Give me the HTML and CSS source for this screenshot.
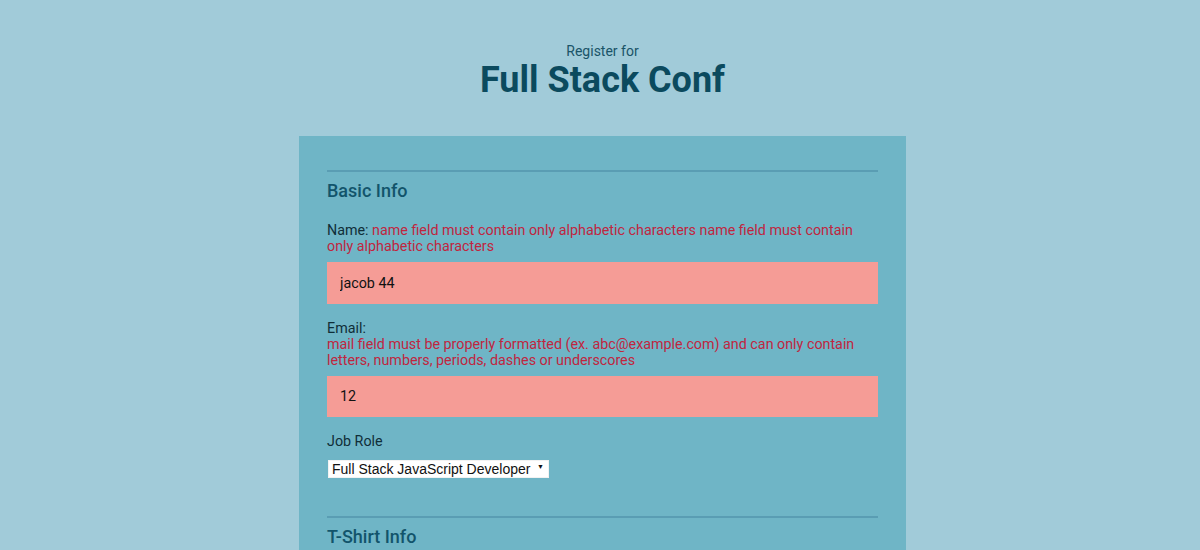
FILE: index.html
```html
<!DOCTYPE html>
<html lang="en">
<head>
    <meta charset="UTF-8">
    <meta name="viewport" content="width=device-width, initial-scale=1.0">
    <title>Full Stack Conf</title>
    <link rel="stylesheet" href="styles.css">
</head>
<body>
    <!-- Page header -->
    <header class="page-header">
        <span class="header-sub">Register for</span>
        <h1 class="header-title">Full Stack Conf</h1>
    </header>

    <form class="container">
        <!-- Basic info -->
        <fieldset class="section">
            <h2 class="section-title">Basic Info</h2>

            <label class="field-label" for="name">Name: <span class="error">name field must contain only alphabetic characters name field must contain only alphabetic characters</span></label>
            <input type="text" id="name" class="text-input invalid" value="jacob 44">

            <label class="field-label" for="mail">Email: <span class="error block">mail field must be properly formatted (ex. abc@example.com) and can only contain letters, numbers, periods, dashes or underscores</span></label>
            <input type="text" id="mail" class="text-input invalid" value="12">

            <label class="field-label" for="title">Job Role</label>
            <div class="select-wrap">
                <select id="title" class="select">
                    <option>Full Stack JavaScript Developer</option>
                    <option>Front End Developer</option>
                    <option>Back End Developer</option>
                    <option>Designer</option>
                    <option>Student</option>
                    <option>Other</option>
                </select>
                <span class="select-arrow">&#9660;</span>
            </div>
        </fieldset>

        <!-- T-Shirt info -->
        <fieldset class="section">
            <h2 class="section-title">T-Shirt Info</h2>
        </fieldset>
    </form>
</body>
</html>
```

FILE: styles.css
```css
body {
    font-family: Roboto, "Noto Sans", Arial, sans-serif;
    margin: 0;
    padding: 0 0 0 5px;
    background-color: #a1cbd9;
    color: #0f2e38;
}

/* Header */
.page-header {
    text-align: center;
    padding-top: 43px;
}

.header-sub {
    display: block;
    font-size: 14px;
    line-height: 16px;
    color: #1a5468;
}

.header-title {
    margin: 0;
    font-size: 36px;
    line-height: 42px;
    font-weight: bold;
    color: #0b4a5e;
}

/* Form container */
.container {
    width: 551px;
    margin: 35px auto 0;
    padding: 34px 28px 0;
    background-color: #6fb5c6;
}

.section {
    margin: 0 0 38px;
    padding: 0;
    border: 0;
    border-top: 2px solid #5a9db3;
}

.section-title {
    margin: 7px 0 19px;
    font-size: 18px;
    line-height: 24px;
    font-weight: 500;
    color: #12546b;
}

.field-label {
    display: block;
    font-size: 14.3px;
    line-height: 16px;
    margin-bottom: 8px;
}

.error {
    color: #c0263f;
}

.error.block {
    display: block;
}

.text-input {
    display: block;
    box-sizing: border-box;
    width: 100%;
    height: 41.5px;
    margin: 0 0 16px;
    padding: 0 13px;
    border: 0;
    font-family: inherit;
    font-size: 14.3px;
    color: #111;
    background-color: #fff;
}

.text-input.invalid {
    background-color: #f59c96;
}

.select-wrap {
    display: inline-block;
    position: relative;
    margin: 2px 0 0 1px;
}

.select {
    appearance: none;
    -webkit-appearance: none;
    width: 221px;
    height: 18px;
    margin: 0;
    padding: 0 0 0 3px;
    border: 1px solid #f2f2f2;
    border-radius: 0;
    background-color: #fff;
    font-family: "Liberation Sans", Arial, sans-serif;
    font-size: 14px;
    line-height: 16px;
    color: #111;
}

.select-arrow {
    position: absolute;
    right: 5px;
    top: 4px;
    font-size: 7px;
    color: #111;
    pointer-events: none;
}
```
